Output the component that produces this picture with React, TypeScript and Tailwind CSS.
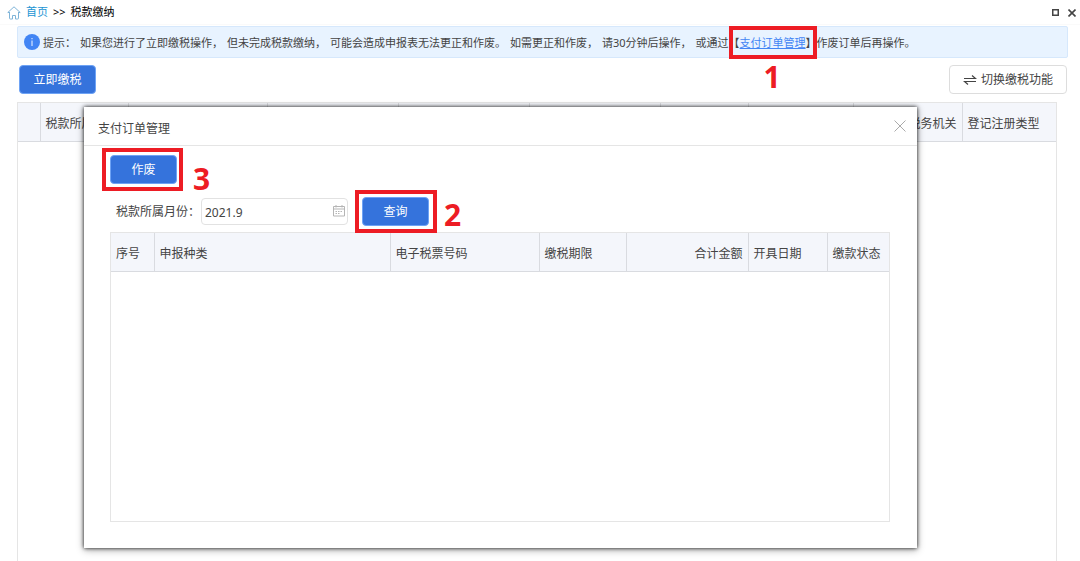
import { ReactNode } from 'react';

interface Column {
  label: string;
  width: string;
  align?: string;
}

const taxColumns: Column[] = [
  { label: '', width: 'w-[22px]' },
  { label: '税款所属期', width: 'w-[88px]' },
  { label: '', width: '' },
  { label: '', width: 'w-[131px]' },
  { label: '', width: 'w-[131px]' },
  { label: '', width: 'w-[131px]' },
  { label: '', width: 'w-[88px]' },
  { label: '', width: 'w-[105px]' },
  { label: '主管税务机关', width: 'w-[109px]', align: 'text-right' },
  { label: '登记注册类型', width: 'w-[94px]' },
];

const orderColumns: Column[] = [
  { label: '序号', width: 'w-[43px]' },
  { label: '申报种类', width: '' },
  { label: '电子税票号码', width: 'w-[149px]' },
  { label: '缴税期限', width: 'w-[87px]' },
  { label: '合计金额', width: 'w-[122px]', align: 'text-right' },
  { label: '开具日期', width: 'w-[79px]' },
  { label: '缴款状态', width: 'w-[62px]' },
];

const noticeParts = [
  '提示：',
  '如果您进行了立即缴税操作，',
  '但未完成税款缴纳，',
  '可能会造成申报表无法更正和作废。',
  '如需更正和作废，',
  '请30分钟后操作，',
  '或通过',
];

const HeaderTable = ({ columns }: { columns: Column[] }) => (
  <table className="w-full table-fixed border-collapse bg-[#f4f6fb]">
    <thead>
      <tr className="h-[38px] border-b border-[#d9dbe0]">
        {columns.map((col, i) => (
          <th
            key={i}
            className={`${col.width} ${col.align ?? 'text-left'} overflow-hidden border-r border-[#d9dbe0] px-[5px] pt-1 font-normal whitespace-nowrap last:border-r-0`}
          >
            {col.label}
          </th>
        ))}
      </tr>
    </thead>
  </table>
);

const PrimaryButton = ({ children, width }: { children: ReactNode; width: string }) => (
  <button
    type="button"
    className={`${width} h-[29px] rounded border border-[#6ea3f5] bg-[#3573dc] pt-px text-white`}
  >
    {children}
  </button>
);

// Red frame drawn around a control, with its step number beside it
const Callout = ({
  step,
  frame,
  label,
  children,
}: {
  step: number;
  frame: string;
  label: string;
  children: ReactNode;
}) => (
  <span className="relative inline-block">
    {children}
    <span className={`pointer-events-none absolute border-4 border-[#ed1c24] ${frame}`} />
    <span className={`absolute text-3xl leading-8 font-bold text-[#ed1c24] ${label}`}>{step}</span>
  </span>
);

const HomeIcon = () => (
  <svg width="14" height="14" viewBox="0 0 14 14" fill="none" stroke="#7fb4d8">
    <path d="M2.5 6.5H0.8L7 0.8l6.2 5.7h-1.7M2.5 6v6.2q0 .8.8.8h2.2V9.5h3V13h2.2q.8 0 .8-.8V6" />
  </svg>
);

const InfoIcon = () => (
  <svg width="16" height="16" viewBox="0 0 16 16" className="shrink-0">
    <circle cx="8" cy="8" r="8" fill="#4285f4" />
    <path d="M8 6.5v5.5M8 4v1.3" stroke="#d5e4ff" strokeWidth="1.2" />
  </svg>
);

const SwapIcon = () => (
  <svg width="14" height="12" viewBox="0 0 14 12" fill="none" stroke="#444" strokeWidth="1.2">
    <path d="M1 4.5h11.5L9 1.5M13 7.5H1.5L5 10.5" />
  </svg>
);

const CalendarIcon = () => (
  <svg width="12" height="12" viewBox="0 0 12 12" fill="none" stroke="#b5b5b5">
    <path d="M0.5 1.5h11v9.5H0.5zM0.5 4h11M3 0v2.5M9 0v2.5" />
    <path d="M2.5 6.5h7M2.5 8.5h5" strokeDasharray="1.5 1" />
  </svg>
);

const OrderDialog = () => (
  <section
    role="dialog"
    aria-labelledby="order-title"
    className="absolute top-[107px] right-[163px] left-[84px] bg-white shadow-[0_0_4px_rgba(0,0,0,0.9),0_2px_8px_rgba(0,0,0,0.3)]"
  >
    <header className="flex h-[39px] items-center justify-between border-b border-[#e5e5e5] pr-[11px] pl-[14px]">
      <h2 id="order-title" className="pt-[6px]">支付订单管理</h2>
      <button type="button" aria-label="关闭">
        <svg width="12" height="12" viewBox="0 0 12 12" stroke="#aaa">
          <path d="M0.5 0.5l11 11M11.5 0.5l-11 11" />
        </svg>
      </button>
    </header>
    <div className="pt-[9px] pr-[27px] pb-[26px] pl-[26px]">
      <Callout step={3} frame="-inset-y-[7px] -right-[6px] -left-2" label="top-2 left-[83px]">
        <PrimaryButton width="w-[67px]">作废</PrimaryButton>
      </Callout>
      <div className="mt-[13px] flex items-center">
        <label htmlFor="month" className="w-[91px] pt-px pl-[6px] whitespace-nowrap">税款所属月份：</label>
        <span className="relative mr-[14px] w-[147px]">
          <input
            id="month"
            defaultValue="2021.9"
            className="block h-[27px] w-full rounded border border-[#e2e2e2] px-[3px] pt-[2px] outline-none"
          />
          <span className="absolute top-[7px] right-[3px]">
            <CalendarIcon />
          </span>
        </span>
        <Callout step={2} frame="-inset-y-[7px] -right-2 -left-[7px]" label="top-[2px] left-[82px]">
          <PrimaryButton width="w-[67px]">查询</PrimaryButton>
        </Callout>
      </div>
      <div className="mt-[6px] min-h-[290px] border border-[#e5e5e5]">
        <HeaderTable columns={orderColumns} />
      </div>
    </div>
  </section>
);

export default function App() {
  return (
    <div className="relative flex min-h-screen flex-col bg-white font-['Noto_Sans','Noto_Sans_CJK_SC',sans-serif] text-xs text-[#444]">
      <header className="flex h-[25px] items-center justify-between border-b border-[#fafafa] pt-px pr-1 pl-[7px] text-[11px] text-black">
        <nav className="flex items-center gap-[5px]">
          <HomeIcon />
          <a href="#" className="text-[#1b95d4]">首页</a>
          <span>&gt;&gt;</span>
          <span>税款缴纳</span>
        </nav>
        <div className="flex items-center gap-[9px]">
          <button type="button" aria-label="最大化">
            <svg width="7" height="7" viewBox="0 0 7 7" fill="none" stroke="#444" strokeWidth="1.5">
              <path d="M0.75 0.75h5.5v5.5h-5.5z" />
            </svg>
          </button>
          <button type="button" aria-label="关闭页面">
            <svg width="8" height="8" viewBox="0 0 8 8" stroke="#444" strokeWidth="1.6">
              <path d="M0.5 0.5l7 7M7.5 0.5l-7 7" />
            </svg>
          </button>
        </div>
      </header>

      <main className="flex flex-1 flex-col pt-px pr-3 pl-[17px]">
        <div className="flex h-8 items-center rounded-xs border border-[#d6e8fc] bg-[#e8f3ff] pl-[6px] text-[11px] whitespace-nowrap">
          <InfoIcon />
          <div className="flex items-center pt-[2px]">
            <p className="flex gap-1 pl-[3px]">
              {noticeParts.map((part) => (
                <span key={part}>{part}</span>
              ))}
            </p>
            <Callout step={1} frame="-top-[10px] -bottom-[9px] left-0 right-0" label="top-[25px] left-[35px]">
              【<a href="#" className="text-[#4285f4] underline">支付订单管理</a>】
            </Callout>
            <span>作废订单后再操作。</span>
          </div>
        </div>

        <div className="flex justify-between pt-[7px] pr-px pb-2 pl-[2px]">
          <PrimaryButton width="w-[77px]">立即缴税</PrimaryButton>
          <button
            type="button"
            className="flex h-[29px] items-center gap-1 rounded border border-[#ddd] px-[13px] pt-px"
          >
            <SwapIcon />
            切换缴税功能
          </button>
        </div>

        <div className="mr-[11px] flex-1 border border-b-0 border-[#e5e5e5]">
          <HeaderTable columns={taxColumns} />
        </div>
      </main>

      <OrderDialog />
    </div>
  );
}
